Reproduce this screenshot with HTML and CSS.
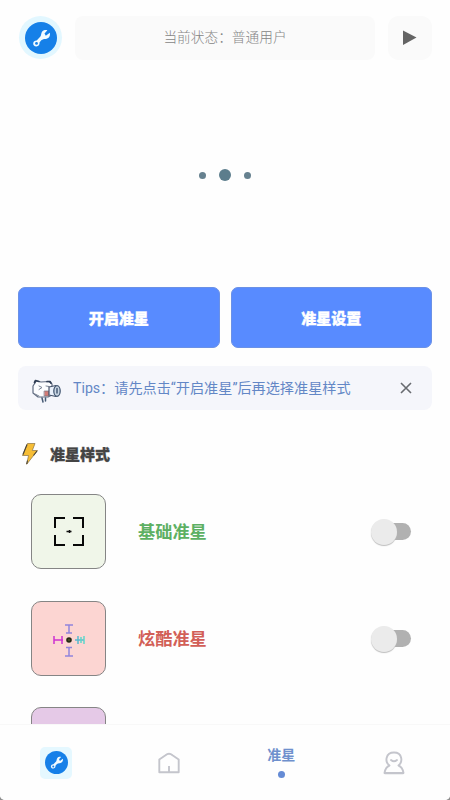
FILE: index.html
```html
<!DOCTYPE html>
<html lang="zh-CN">
<head>
<meta charset="utf-8">
<meta name="viewport" content="width=device-width">
<title>准星</title>
<link rel="stylesheet" href="styles.css">
</head>
<body>
<svg class="defs" aria-hidden="true">
  <symbol id="wrench" viewBox="0 0 32 32">
    <circle cx="16" cy="16" r="16" fill="#1680e8"/>
    <path d="M17.2 9.6c1.6-1.8 3.7-1.8 5.2-1.4l-2.9 3.3 1.3 2.3 4-3c.8 3-.9 6.100-4.200 6.200-1.700 0-3 .2-4.300 1.300l-1.800 2.200c.4 2.200-1 3.800-3 4-2.100.1-3.500-1.500-3.300-3.300.2-1.900 1.700-2.900 3.500-2.800l3.700-3.800c.9-1 .6-3.500 1.800-5z" fill="#f2fbff"/>
    <circle cx="11.500" cy="21.400" r="1.400" fill="#1680e8"/>
  </symbol>
</svg>
<div class="screen">
  <main class="content">
    <header class="top">
      <div class="avatar"><svg class="avatar-icon"><use href="#wrench"/></svg></div>
      <div class="status">当前状态：普通用户</div>
      <div class="play"><svg width="16" height="16" viewBox="0 0 16 16"><path d="M1 .5 14.500 7.500 1 15z" fill="#646464"/></svg></div>
    </header>
    <section class="preview"><i class="dot"></i><i class="dot big"></i><i class="dot"></i></section>
    <section class="actions">
      <button class="action">开启准星</button>
      <button class="action">准星设置</button>
    </section>
    <section class="tips">
      <svg class="mascot" width="31" height="26" viewBox="0 0 31 26" stroke-linejoin="round" stroke-linecap="round">
        <path d="M4 5 5 3 8 3.500 10 4 18 3.500 21 6 21 17 17 19 7 19 2 15 2 8z" fill="#fcfdff" stroke="#5f6b80" stroke-width="1.200"/>
        <path d="M3.500 4.500 4.500 2.500 8 3.500M16 3.500 19 3.500 20 5" fill="none" stroke="#2f3d54" stroke-width="1.700"/>
        <path d="M8 8 11 9.500 8 11.500M15 8 18 8.500M4 16 8 18" fill="none" stroke="#7b8596" stroke-width="1"/>
        <path d="M13.500 13h4.500v5h-4.500z" fill="#d17b77" stroke="#77707c" stroke-width=".7"/>
        <path d="M18 9 25 7.500v11l-7-1.500z" fill="#eaf1fb" stroke="#46536a" stroke-width="1.200"/>
        <ellipse cx="26" cy="13" rx="3.200" ry="5.300" fill="#c9d6e4" stroke="#465a74" stroke-width="1.300"/>
        <path d="M26 10.500v4.500M11 20l1 4M14.500 20v3" fill="none" stroke="#465a74" stroke-width="1.500"/>
      </svg>
      <p class="tips-text">Tips：请先点击“开启准星”后再选择准星样式</p>
      <svg class="close" width="12" height="12" viewBox="0 0 12 12"><path d="M1 1 11 11M11 1 1 11" stroke="#686b70" stroke-width="1.600"/></svg>
    </section>
    <h2 class="heading">
      <svg width="18" height="24" viewBox="0 0 18 24"><path d="M6.500 1.500H14L11.300 8.500H16.500L5.700 22.300 7.500 13.500H1.500z" fill="#f6bd35" stroke="#8a7141" stroke-width=".7"/><path d="M6 2.500 2 12.500M16 9 12.500 13.500M6.500 18.500 5.700 22" fill="none" stroke="#474238" stroke-width="1.100"/></svg>
      <span>准星样式</span>
    </h2>
    <ul class="styles">
      <li class="row">
        <div class="tile green">
          <svg width="74" height="74" viewBox="0 0 74 74"><path d="M23 33V23H33M41 23H51V33M51 40V50H41M33 50H23V40" fill="none" stroke="#080808" stroke-width="2"/><path d="M34.500 36.500H39.500M37.500 35V38" stroke="#111" stroke-width="1.500"/></svg>
        </div>
        <span class="name basic">基础准星</span>
        <span class="switch"></span>
      </li>
      <li class="row">
        <div class="tile red">
          <svg width="74" height="74" viewBox="0 0 74 74" fill="none" stroke-width="1.500">
            <path d="M33 23H41M34 31H40M37 23V31M34 45.500H40M33 54H41M37 45.500V54" stroke="#9184dc"/>
            <path d="M22 34V42M30 34V42M22 38H31" stroke="#ce31d1"/>
            <path d="M43 38H52M46 34V42" stroke="#59b8ce"/><path d="M49 35V41M52 34V42" stroke="#61d6ca"/>
            <circle cx="37" cy="38" r="2.800" fill="#252916"/><circle cx="37" cy="38" r=".7" fill="#778542"/>
          </svg>
        </div>
        <span class="name cool">炫酷准星</span>
        <span class="switch"></span>
      </li>
      <li class="row">
        <div class="tile purple"><svg width="74" height="74" viewBox="0 0 74 74"><circle cx="37" cy="20" r="4" fill="#c9a5cc"/></svg></div>
      </li>
    </ul>
  </main>
  <nav class="nav">
    <div class="tab"><div class="nav-logo"><svg class="nav-wrench"><use href="#wrench"/></svg></div></div>
    <div class="tab">
      <svg width="22" height="22" viewBox="0 0 22 22" fill="none" stroke="#c4c5cc" stroke-width="1.900" stroke-linejoin="round"><path d="M1.300 20.300V7.500L7.500 3.300Q11 .3 14.500 3.300L20.700 7.500V20.300zM11 20V14"/></svg>
    </div>
    <div class="tab active"><span>准星</span><i></i></div>
    <div class="tab">
      <svg width="22" height="24" viewBox="0 0 22 24" fill="none" stroke="#c4c5cc" stroke-width="1.900" stroke-linejoin="round" stroke-linecap="round"><path d="M6.500 14.500C1.500 11 2.500 1.500 11 1.500S20 11 15.500 14.500Q19.500 16 20.500 22H1.500Q2.500 16 6.500 14.500z"/><path d="M8 9Q11 11.500 14 9"/><path d="M2 22.300H20" stroke-width="2"/></svg>
    </div>
  </nav>
</div>
</body>
</html>
```

FILE: styles.css
```css
* { box-sizing: border-box; margin: 0; padding: 0; }

body {
  background: #8f8f8f;
  font-family: Roboto, "Noto Sans CJK SC", sans-serif;
}

.defs { display: none; }
svg { display: block; flex: none; }

.screen {
  display: flex;
  flex-direction: column;
  height: 800px;
  overflow: hidden;
  background: #fefefe;
  border-radius: 0 0 5px 5px;
}

.content {
  height: 724px;
  flex: none;
  overflow: hidden;
  padding: 16px 18px 0;
}

.top { display: flex; height: 44px; padding-left: 1px; }

.avatar {
  display: grid;
  place-items: center;
  width: 43px;
  height: 43px;
  border-radius: 50%;
  background: #e2f7ff;
}

.avatar-icon { width: 32px; height: 32px; }

.status {
  flex: 1;
  margin: 0 13px 0 13px;
  border-radius: 8px;
  background: #fafafa;
  color: #858585;
  font-size: 13.7px;
  font-weight: 300;
  line-height: 42px;
  text-align: center;
}

.play {
  display: grid;
  place-items: center;
  width: 44px;
  border-radius: 11px;
  background: #fafafa;
}

.preview {
  display: flex;
  align-items: center;
  justify-content: center;
  gap: 13px;
  height: 227px;
}

.dot { width: 7px; height: 7px; border-radius: 50%; background: #66818f; margin-top: 3px; }
.dot.big { width: 12px; height: 12px; background: #5c7d8c; }

.actions { display: flex; gap: 11px; }

.action {
  flex: 1;
  height: 61px;
  border: 1px solid #6b91e6;
  border-radius: 7px;
  background: #588bff;
  color: #fff;
  font: 900 15px "Noto Sans CJK SC", sans-serif;
  -webkit-text-stroke: .4px #fff;
}

.tips {
  display: flex;
  align-items: center;
  height: 44px;
  margin-top: 18px;
  padding: 0 20px 0 13px;
  border-radius: 8px;
  background: #f5f6fb;
}

.mascot { margin-top: 6px; }

.tips-text {
  flex: 1;
  margin-left: 11px;
  color: #6387c6;
  font-size: 14.15px;
  line-height: 20px;
  white-space: nowrap;
}

.heading {
  display: flex;
  align-items: center;
  gap: 11px;
  height: 24px;
  margin-top: 32px;
  padding-left: 3px;
  color: #444;
  font: 900 15px/22px "Noto Sans CJK SC", sans-serif;
  -webkit-text-stroke: .3px #444;
}

.styles {
  display: grid;
  gap: 31.5px;
  margin: 28px 21px 0 13px;
  list-style: none;
}

.row { display: flex; align-items: center; height: 75px; }

.tile {
  display: grid;
  place-items: center;
  width: 75px;
  height: 75px;
  overflow: hidden;
  border: 1.5px solid #858585;
  border-radius: 10px;
}

.green { background: #f0f6e9; }
.red { background: #fcd5d2; }
.purple { background: #e5c9e7; }

.name {
  flex: 1;
  margin-left: 32px;
  padding-top: 1px;
  font-size: 17.2px;
  font-weight: 700;
  line-height: 24px;
}

.basic { color: #5db063; }
.cool { color: #d25f57; }

.switch {
  position: relative;
  width: 39px;
  height: 17px;
  border-radius: 9px;
  background: #b1b1b1;
}

.switch::before {
  content: "";
  position: absolute;
  left: -1px;
  top: -4px;
  width: 26px;
  height: 26px;
  border-radius: 50%;
  background: #ebebeb;
  box-shadow: 0 1px 1px #bdbdbd;
}

.nav {
  display: grid;
  grid-template-columns: repeat(4, 1fr);
  height: 76px;
  border-top: 1px solid #f8f8f8;
  background: #fefefe;
}

.tab { display: grid; place-items: center; }

.nav-logo {
  display: grid;
  place-items: center;
  width: 32px;
  height: 32px;
  border-radius: 5px;
  background: #e5f8ff;
}

.nav-wrench { width: 23px; height: 23px; }

.active {
  align-content: center;
  gap: 6px;
  padding-bottom: 2px;
  color: #6f90cd;
  font-size: 14px;
  font-weight: 700;
  line-height: 20px;
}

.active i { width: 7px; height: 7px; border-radius: 50%; background: #658bd5; }
```
